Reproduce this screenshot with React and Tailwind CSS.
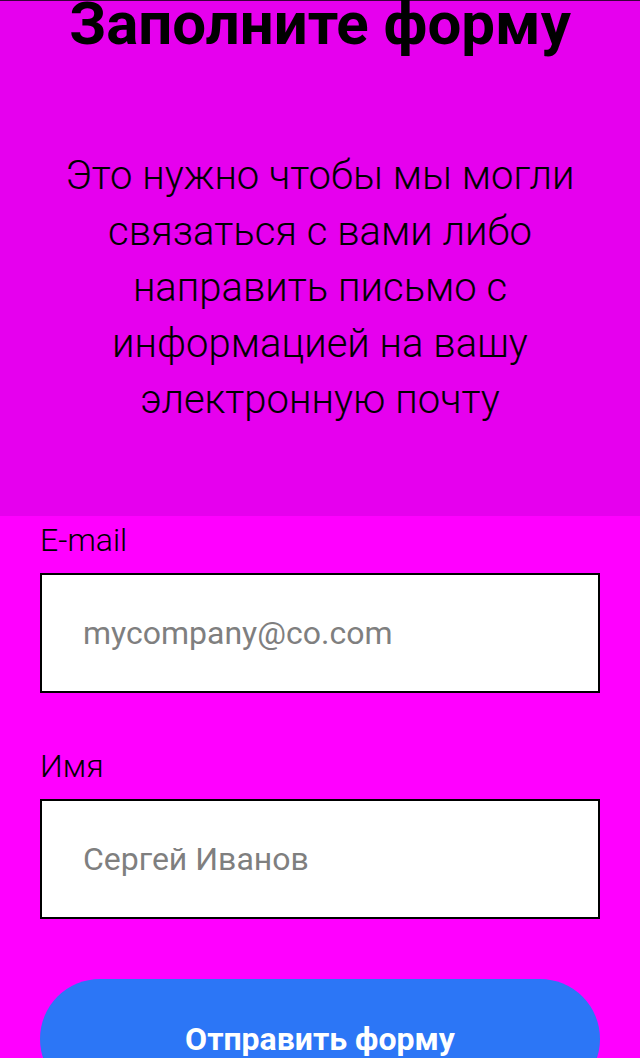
export default function App() {
  return (
    <div className="w-[640px] min-h-[1058px] bg-[#ff00ff] font-['Roboto',sans-serif] text-black">
      <section className="bg-[#e600ee] border-t border-[#3a003c] pb-[88px] text-center">
        <h1 className="text-[60px] font-bold leading-[46px] whitespace-nowrap">Заполните форму</h1>
        <p className="mt-[101px] px-[50px] text-[40px] font-light leading-[56px]">
          Это нужно чтобы мы могли связаться с вами либо направить письмо с информацией на вашу электронную почту
        </p>
      </section>

      <form className="px-10 pt-[5px]" onSubmit={(e) => e.preventDefault()}>
        <label className="block text-[32px] font-light leading-[38px] mb-[14px]">E-mail</label>
        <input
          type="email"
          placeholder="mycompany@co.com"
          className="block w-full h-[120px] border-2 border-black bg-white pl-[41px] text-[32px] placeholder:text-[#7f7f7f] outline-none"
        />

        <label className="block mt-[54px] text-[32px] font-light leading-[38px] mb-[14px]">Имя</label>
        <input
          type="text"
          placeholder="Сергей Иванов"
          className="block w-full h-[120px] border-2 border-black bg-white pl-[41px] text-[32px] placeholder:text-[#7f7f7f] outline-none"
        />

        <button
          type="submit"
          className="mt-[60px] w-full h-[120px] rounded-full bg-[#2c76f6] text-white text-[32px] font-bold"
        >
          Отправить форму
        </button>
      </form>
    </div>
  );
}
